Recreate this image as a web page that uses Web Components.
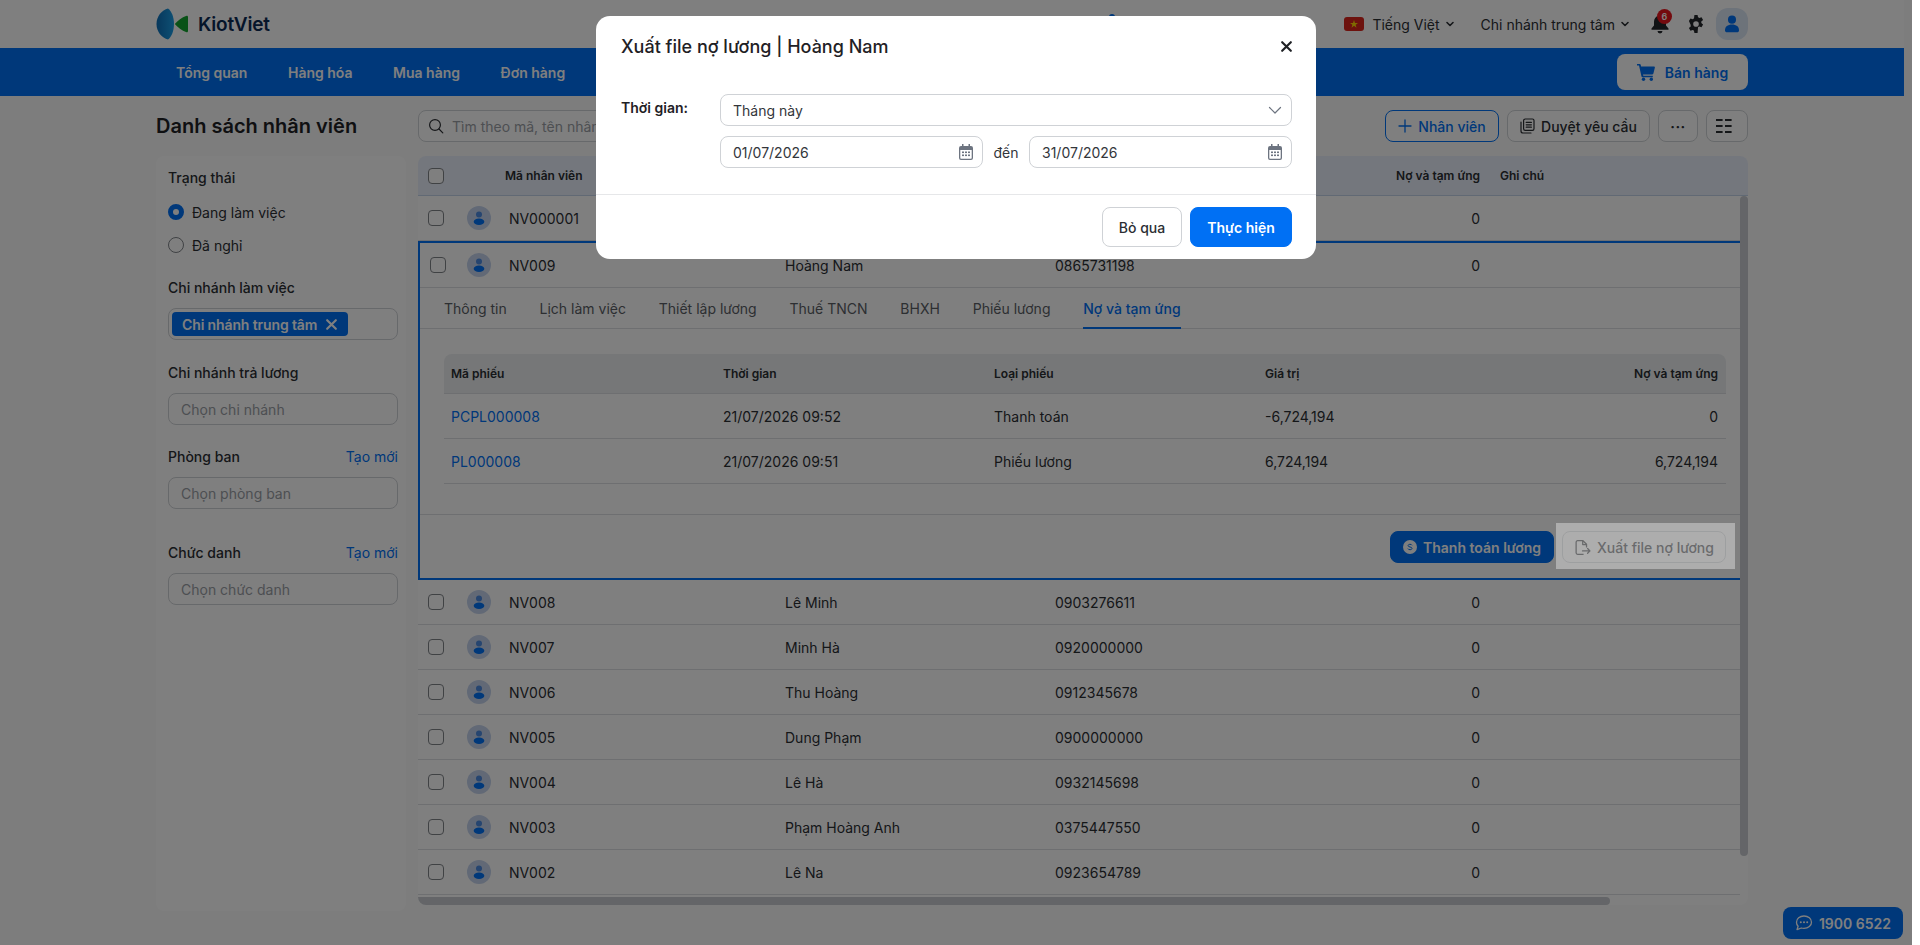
<!DOCTYPE html>
<html lang="vi">
<head>
<meta charset="utf-8">
<title>Danh sách nhân viên</title>
<style>
  html, body { margin: 0; height: 100%; overflow: hidden; background: #fff; }
  body { display: flex; font-family: Inter, "Noto Sans", sans-serif; }
</style>
</head>
<body>
<kv-app></kv-app>
<script>
// shared tiny helper so each element only declares css + html
class KvBase extends HTMLElement {
  constructor() {
    super();
    this.attachShadow({ mode: 'open' });
  }
  connectedCallback() {
    this.shadowRoot.innerHTML = `<style>*{box-sizing:border-box}${this.css()}</style>${this.html()}`;
  }
  a(name, fallback = '') {
    return this.getAttribute(name) ?? fallback;
  }
}

const ICONS = {
  search: '<svg width="16" height="16" viewBox="0 0 16 16" fill="none" stroke="currentColor" stroke-width="1.2"><circle cx="7" cy="7" r="5.4"/><path d="M11 11l3.8 3.8" stroke-linecap="round"/></svg>',
  chev: '<svg width="10" height="10" viewBox="0 0 10 10" fill="none" stroke="currentColor" stroke-width="1.6"><path d="M2 3.5L5 6.5L8 3.5" stroke-linecap="round" stroke-linejoin="round"/></svg>',
  chevLg: '<svg width="14" height="14" viewBox="0 0 14 14" fill="none" stroke="currentColor" stroke-width="1.2"><path d="M1.5 4.5L7 10L12.5 4.5" stroke-linecap="round" stroke-linejoin="round"/></svg>',
  plus: '<svg width="14" height="14" viewBox="0 0 14 14" fill="none" stroke="currentColor" stroke-width="1.3"><path d="M7 1v12M1 7h12" stroke-linecap="round"/></svg>',
  docs: '<svg width="15" height="16" viewBox="0 0 15 16" fill="none" stroke="currentColor" stroke-width="1.2"><rect x="3.6" y="1" width="10.4" height="11.4" rx="1.6"/><path d="M1 4v9a2 2 0 0 0 2 2h8M6.2 4.4h5.2M6.2 6.8h5.2M6.2 9.2h5.2" stroke-linecap="round"/></svg>',
  grid: '<svg width="16" height="14" viewBox="0 0 16 14" fill="currentColor"><rect y="0" width="6.6" height="2"/><rect x="9" y="0" width="6.6" height="2"/><rect y="6" width="6.6" height="2"/><rect x="9" y="6" width="6.6" height="2"/><rect y="12" width="6.6" height="2"/><rect x="9" y="12" width="6.6" height="2"/></svg>',
  cart: '<svg width="18" height="18" viewBox="0 0 18 18" fill="currentColor"><path d="M0 1h2.7c.5 0 .9.3 1 .8L4.1 3.4H17c.6 0 1 .6.9 1.2l-1.5 6c-.1.5-.5.8-1 .8H6l.3 1.4h9.5v1.5H5.5c-.5 0-.9-.3-1-.8L2 2.6H0z"/><circle cx="6.5" cy="16.2" r="1.7"/><circle cx="14.3" cy="16.2" r="1.7"/></svg>',
  gear: '<svg width="18" height="18" viewBox="1 0 14 16"><path fill="currentColor" fill-rule="evenodd" d="M6.6 0h2.8l.4 2.1c.4.2.8.3 1.1.6l2-.7 1.4 2.4-1.6 1.4a5 5 0 0 1 0 1.3l1.6 1.4-1.4 2.4-2-.7c-.3.2-.7.4-1.1.6L9.4 16H6.6l-.4-2.1c-.4-.2-.8-.4-1.1-.6l-2 .7-1.4-2.4 1.6-1.4a5 5 0 0 1 0-1.3L1.7 5.4 3.1 3l2 .7c.3-.3.7-.4 1.1-.6zM8 5.500a2.500 2.500 0 1 0 0 5 2.500 2.500 0 0 0 0-5z"/></svg>',
  bell: '<svg width="18" height="20" viewBox="0 0 18 20" fill="currentColor"><path d="M9 0c.8 0 1.4.6 1.4 1.4v.4C13.5 2.500 15 5 15 8v3.500l2.500 3v1.200H.5v-1.200l2.500-3V8c0-3 1.500-5.500 4.600-6.200v-.4C7.600.6 8.200 0 9 0z"/><path d="M6.500 17h5a2.500 2.500 0 0 1-5 0z"/></svg>',
  user: '<svg width="16" height="20" viewBox="0 0 16 20" fill="currentColor"><circle cx="8" cy="5" r="4.600"/><path d="M0 17c0-4 3-6.500 8-6.500s8 2.500 8 6.500c0 1.500-1 2.500-2.400 2.500H2.400C1 19.500 0 18.500 0 17z"/></svg>',
  cal: '<svg width="14" height="16" viewBox="0 0 14 16"><path fill="currentColor" fill-rule="evenodd" d="M3 0h1.500v2h5V0H11v2h1a2 2 0 0 1 2 2v10a2 2 0 0 1-2 2H2a2 2 0 0 1-2-2V4a2 2 0 0 1 2-2h1zM1.300 6v8c0 .4.300.7.700.7h10c.4 0 .7-.3.7-.7V6z"/><g fill="currentColor"><rect x="3" y="7.500" width="2" height="1.600"/><rect x="6" y="7.500" width="2" height="1.600"/><rect x="9" y="7.500" width="2" height="1.600"/><rect x="3" y="10.500" width="2" height="1.600"/><rect x="6" y="10.500" width="2" height="1.600"/><rect x="9" y="10.500" width="2" height="1.600"/></g></svg>',
  file: '<svg width="17" height="17" viewBox="0 0 16 16" fill="none" stroke="currentColor" stroke-width="1.2"><path d="M9 14.400H3.400a1.400 1.400 0 0 1-1.400-1.400V3a1.400 1.400 0 0 1 1.400-1.400h5L11.800 5v3" stroke-linejoin="round"/><path d="M8.200 1.800V5.200h3.400M8 11.200h7M12.800 9l2.200 2.200-2.200 2.200" stroke-linecap="round" stroke-linejoin="round"/></svg>',
  chat: '<svg width="18" height="16" viewBox="0 0 18 16" fill="none" stroke="currentColor" stroke-width="1.300"><path d="M9 1c4.300 0 7.500 2.700 7.500 6.200S13.300 13.400 9 13.400c-1 0-1.900-.1-2.700-.4L2 14.600l1.100-3.300C2 10.200 1.500 8.800 1.500 7.200 1.500 3.700 4.700 1 9 1z" stroke-linejoin="round"/><g fill="currentColor" stroke="none"><circle cx="5.800" cy="7.200" r="1"/><circle cx="9" cy="7.200" r="1"/><circle cx="12.200" cy="7.200" r="1"/></g></svg>',
  coin: '<svg width="14" height="14" viewBox="0 0 14 14"><circle cx="7" cy="7" r="7" fill="#fff"/><path d="M9 5.300C8.700 4.600 8 4.300 7 4.300c-1.100 0-1.900.5-1.900 1.300 0 1.900 3.900.9 3.900 2.800 0 .8-.8 1.300-2 1.300-1.100 0-1.800-.4-2.100-1.100" fill="none" stroke="#0070f4" stroke-width="1"/></svg>',
  x: '<svg width="12" height="12" viewBox="0 0 12 12" fill="none" stroke="currentColor" stroke-width="2"><path d="M2 2l8 8M10 2l-8 8" stroke-linecap="round"/></svg>'
};

class KvHeader extends KvBase {
  css() {
    return `
      :host { display: block; height: 48px; background: #fff; position: relative; }
      .inner { width: 1592px; height: 48px; margin: 0 auto; display: flex; align-items: center; color: #2b2e33; font-size: 14px; }
      .logo { display: flex; align-items: center; gap: 10px; }
      .word { font-size: 19px; font-weight: 600; color: #0b2a55; letter-spacing: -.2px; }
      .right { margin-left: auto; display: flex; align-items: center; }
      .lang, .branch { display: flex; align-items: center; gap: 5px; }
      .flag { width: 20px; height: 14px; border-radius: 3px; background: #da251d; display: flex; align-items: center; justify-content: center; margin-right: 3px; }
      .branch { margin-left: 26px; }
      .bell { margin-left: 21px; width: 18px; height: 20px; position: relative; color: #23262b; display: flex; }
      .badge { position: absolute; left: 6px; top: -5px; width: 15px; height: 15px; border-radius: 50%; background: #e8141c; color: #fff; font-size: 9px; font-weight: 600; display: flex; align-items: center; justify-content: center; }
      .gear { margin-left: 18px; color: #23262b; display: flex; }
      .me { margin-left: 11px; width: 32px; height: 32px; border-radius: 12px; background: #dbe6f5; color: #0070f4; display: flex; align-items: center; justify-content: center; }
      .me svg { width: 14px; height: 18px; }
      .dome { position: absolute; left: 1109px; top: 14px; width: 6px; height: 6px; border-radius: 50%; background: #0070f4; }
    `;
  }
  html() {
    return `
      <div class="dome"></div>
      <div class="inner">
        <div class="logo">
          <svg width="32" height="32" viewBox="0 0 32 32">
            <defs><linearGradient id="lg" x1="0" x2="1"><stop offset="0" stop-color="#0e6fb8"/><stop offset="1" stop-color="#1ca0e8"/></linearGradient></defs>
            <path d="M12 .5C15.500 3 18 9 18 16s-2.500 13-6 15.500C6 30 .5 24 .5 16S6 2 12 .5z" fill="url(#lg)"/>
            <path d="M32 9v14c0 .7-.5 1.500-1.400 1.200C25.500 22.500 22 19.500 18.800 16 22 12.500 25.500 9.500 30.600 7.800 31.500 7.500 32 8.300 32 9z" fill="#12a52e"/>
          </svg>
          <span class="word">KiotViet</span>
        </div>
        <div class="right">
          <div class="lang">
            <span class="flag"><svg width="8" height="8" viewBox="0 0 10 10"><path d="M5 0l1.200 3.600H10L7 5.900l1.100 3.700L5 7.300 1.900 9.600 3 5.900 0 3.600h3.800z" fill="#ffd900"/></svg></span>
            <span>Tiếng Việt</span>${ICONS.chev}
          </div>
          <div class="branch"><span>Chi nhánh trung tâm</span>${ICONS.chev}</div>
          <div class="bell">${ICONS.bell}<span class="badge">6</span></div>
          <div class="gear">${ICONS.gear}</div>
          <div class="me">${ICONS.user}</div>
        </div>
      </div>
    `;
  }
}

class KvNav extends KvBase {
  css() {
    return `
      :host { display: block; height: 48px; background: #0070f4; }
      .inner { width: 1592px; height: 48px; margin: 0 auto; display: flex; align-items: center; color: #fff; font-size: 14px; font-weight: 600; }
      .item { margin-left: 20px; margin-right: 20.5px; }
      .sell { margin-left: auto; width: 131px; height: 36px; border-radius: 8px; background: #fff; color: #0070f4; display: flex; align-items: center; justify-content: center; gap: 10px; }
    `;
  }
  html() {
    return `
      <div class="inner">
        <span class="item">Tổng quan</span>
        <span class="item">Hàng hóa</span>
        <span class="item">Mua hàng</span>
        <span class="item">Đơn hàng</span>
        <div class="sell">${ICONS.cart}<span>Bán hàng</span></div>
      </div>
    `;
  }
}

class KvButton extends KvBase {
  css() {
    const w = this.a('w');
    const h = this.a('h', '32');
    return `
      :host { display: inline-flex; }
      .b { height: ${h}px; ${w ? `width:${w}px;` : ''} border-radius: 8px; border: 1px solid #cfd2d6; background: #fff; color: #2b2e33; display: flex; align-items: center; justify-content: center; gap: 6px; font-size: 14px; font-weight: 500; white-space: nowrap; }
      .outline { border-color: #0070f4; color: #0070f4; }
      .primary { border-color: #0070f4; background: #0070f4; color: #fff; font-weight: 600; }
    `;
  }
  html() {
    return `<div class="b ${this.a('kind')}">${ICONS[this.a('icon')] || ''}<span><slot></slot></span></div>`;
  }
}

class KvCheckbox extends KvBase {
  css() {
    return `:host { display: block; width: 16px; height: 16px; border: 1.5px solid #808489; border-radius: 4px; background: #fff; }`;
  }
  html() { return ''; }
}

class KvAvatar extends KvBase {
  css() {
    return `:host { display: block; width: 24px; height: 24px; }`;
  }
  html() {
    return `<svg width="24" height="24" viewBox="0 0 24 24"><circle cx="12" cy="12" r="12" fill="#c4d3ec"/><circle cx="12" cy="8.600" r="3" fill="#4d8ae0"/><ellipse cx="12" cy="15.800" rx="5.300" ry="3.200" fill="#0070f4"/></svg>`;
  }
}

class KvField extends KvBase {
  css() {
    return `
      :host { display: block; }
      .head { display: flex; justify-content: space-between; height: 20px; line-height: 20px; font-size: 14px; font-weight: 500; color: #2b2e33; margin-bottom: 10px; }
      .new { color: #0070f4; font-weight: 400; }
      .box { height: 32px; border: 1px solid #cfd2d6; border-radius: 8px; background: #fff; display: flex; align-items: center; padding: 0 12px; font-size: 14px; color: #9a9ea5; }
      .box.tagged { padding: 0 3px; }
      .tag { height: 24px; width: 176px; border-radius: 4px; background: #0070f4; color: #fff; font-weight: 600; letter-spacing: -.12px; display: flex; align-items: center; justify-content: space-between; padding: 0 10px 0 10px; }
      .tag svg { width: 13px; height: 13px; }
    `;
  }
  html() {
    const tag = this.a('tag');
    return `
      <div class="head"><span>${this.a('label')}</span>${this.hasAttribute('create') ? '<span class="new">Tạo mới</span>' : ''}</div>
      ${tag
        ? `<div class="box tagged"><span class="tag"><span>${tag}</span>${ICONS.x}</span></div>`
        : `<div class="box">${this.a('placeholder')}</div>`}
    `;
  }
}

class KvSidebar extends KvBase {
  css() {
    return `
      :host { display: block; height: 755px; background: #fff; border-radius: 8px; padding: 12px 8px 0 12px; font-size: 14px; color: #2b2e33; }
      .t { height: 20px; line-height: 20px; font-weight: 500; }
      .radio { display: flex; align-items: center; gap: 8px; height: 20px; }
      .dot { width: 16px; height: 16px; border-radius: 50%; border: 1.5px solid #808489; flex: none; }
      .dot.on { border: 5px solid #0070f4; background: #fff; }
    `;
  }
  html() {
    return `
      <div class="t">Trạng thái</div>
      <div class="radio" style="margin-top:14px"><span class="dot on"></span>Đang làm việc</div>
      <div class="radio" style="margin-top:13px"><span class="dot"></span>Đã nghỉ</div>
      <kv-field style="margin-top:23px" label="Chi nhánh làm việc" tag="Chi nhánh trung tâm"></kv-field>
      <kv-field style="margin-top:23px" label="Chi nhánh trả lương" placeholder="Chọn chi nhánh"></kv-field>
      <kv-field style="margin-top:22px" label="Phòng ban" create placeholder="Chọn phòng ban"></kv-field>
      <kv-field style="margin-top:34px" label="Chức danh" create placeholder="Chọn chức danh"></kv-field>
    `;
  }
}

class KvToolbar extends KvBase {
  css() {
    return `
      :host { display: flex; gap: 8px; height: 32px; }
      .search { width: 600px; margin-right: auto; height: 32px; border: 1px solid #cfd2d6; border-radius: 8px; background: #fff; display: flex; align-items: center; gap: 8px; padding: 0 9px; font-size: 14px; color: #9a9ea5; }
      .search svg { color: #2b2e33; flex: none; }
      .more { font-weight: 700; letter-spacing: .5px; }
    `;
  }
  html() {
    return `
      <div class="search">${ICONS.search}<span>Tìm theo mã, tên nhân viên</span></div>
      <kv-button kind="outline" icon="plus" w="114">Nhân viên</kv-button>
      <kv-button icon="docs" w="143">Duyệt yêu cầu</kv-button>
      <kv-button w="40"><span class="more">···</span></kv-button>
      <kv-button icon="grid" w="42"></kv-button>
    `;
  }
}

const ROW_COLS = '49px 42px 276px 270px 225px 200px 1fr';

class KvRow extends KvBase {
  css() {
    return `
      :host { display: grid; grid-template-columns: ${ROW_COLS}; align-items: center; height: 45px; border-bottom: 1px solid #dcdfe3; font-size: 14px; color: #2b2e33; background: #fff; }
      kv-checkbox { margin-left: 10px; }
      .debt { text-align: right; }
    `;
  }
  html() {
    return `
      <kv-checkbox></kv-checkbox>
      <kv-avatar></kv-avatar>
      <span>${this.a('code')}</span>
      <span>${this.a('name')}</span>
      <span>${this.a('phone')}</span>
      <span class="debt">0</span>
      <span></span>
    `;
  }
}

class KvDebtTable extends KvBase {
  css() {
    return `
      :host { display: block; margin: 25px 14px 0 24px; font-size: 14px; color: #2b2e33; }
      .r { display: grid; grid-template-columns: 272px 271px 271px 1fr 160px; align-items: center; height: 45px; border-bottom: 1px solid #dcdfe3; padding: 0 8px 0 7px; }
      .h { height: 40px; background: #eceef1; font-size: 12px; font-weight: 600; border-radius: 8px 8px 0 0; }
      .end { text-align: right; }
      a { color: #0070f4; text-decoration: none; }
    `;
  }
  html() {
    return `
      <div class="r h"><span>Mã phiếu</span><span>Thời gian</span><span>Loại phiếu</span><span>Giá trị</span><span class="end">Nợ và tạm ứng</span></div>
      <div class="r"><a href="#">PCPL000008</a><span>21/07/2026 09:52</span><span>Thanh toán</span><span>-6,724,194</span><span class="end">0</span></div>
      <div class="r"><a href="#">PL000008</a><span>21/07/2026 09:51</span><span>Phiếu lương</span><span>6,724,194</span><span class="end">6,724,194</span></div>
    `;
  }
}

class KvDetail extends KvBase {
  css() {
    return `
      :host { display: block; height: 339px; border: 2px solid #0070f4; border-right: 0; background: #fff; }
      .top { display: grid; grid-template-columns: 47px 42px 276px 270px 225px 200px 1fr; align-items: center; height: 45px; border-bottom: 1px solid #dcdfe3; font-size: 14px; color: #2b2e33; }
      .top kv-checkbox { margin-left: 10px; }
      .debt { text-align: right; }
      .tabs { display: flex; height: 41px; border-bottom: 1px solid #dcdfe3; font-size: 14px; color: #5a5e65; padding-left: 24px; gap: 32.8px; }
      .tab { height: 41px; line-height: 41px; }
      .tab.on { color: #0070f4; font-weight: 500; border-bottom: 2px solid #0070f4; }
      .foot { margin-top: 30px; border-top: 1px solid #dcdfe3; display: flex; justify-content: flex-end; gap: 8px; padding: 16px 14px 0 0; }
    `;
  }
  html() {
    return `
      <div class="top">
        <kv-checkbox></kv-checkbox><kv-avatar></kv-avatar>
        <span>NV009</span><span>Hoàng Nam</span><span>0865731198</span><span class="debt">0</span><span></span>
      </div>
      <div class="tabs">
        <span class="tab">Thông tin</span>
        <span class="tab">Lịch làm việc</span>
        <span class="tab">Thiết lập lương</span>
        <span class="tab">Thuế TNCN</span>
        <span class="tab">BHXH</span>
        <span class="tab">Phiếu lương</span>
        <span class="tab on">Nợ và tạm ứng</span>
      </div>
      <kv-debt-table></kv-debt-table>
      <div class="foot">
        <kv-button kind="primary" icon="coin" w="164">Thanh toán lương</kv-button>
        <kv-button icon="file" w="164">Xuất file nợ lương</kv-button>
      </div>
    `;
  }
}

class KvEmployees extends KvBase {
  css() {
    return `
      :host { display: block; height: 749px; position: relative; background: #fff; border-radius: 8px; overflow: hidden; }
      .head { display: grid; grid-template-columns: ${ROW_COLS}; align-items: center; height: 40px; background: #e9eefa; border-bottom: 1px solid #c3d2e8; font-size: 12px; font-weight: 600; color: #2b2e33; }
      .head kv-checkbox { margin-left: 10px; }
      .code { margin-left: -4px; grid-column: 3; }
      .debt { grid-column: 6; text-align: right; }
      .note { margin-left: 20px; }
      .body { width: 1322px; }
      .vbar { position: absolute; right: 0; top: 40px; width: 8px; height: 660px; border-radius: 4px; background: #c8cbd1; }
      .hbar { position: absolute; left: 0; bottom: 0; height: 8px; width: 1192px; border-radius: 0 4px 4px 0; background: #c8cbd1; }
    `;
  }
  html() {
    return `
      <div class="head">
        <kv-checkbox></kv-checkbox>
        <span class="code">Mã nhân viên</span>
        <span class="debt">Nợ và tạm ứng</span>
        <span class="note">Ghi chú</span>
      </div>
      <div class="body"><slot></slot></div>
      <div class="vbar"></div>
      <div class="hbar"></div>
    `;
  }
}

class KvModal extends KvBase {
  css() {
    return `
      :host { display: block; width: 720px; height: 243px; background: #fff; border-radius: 14px; color: #1f2125; font-size: 14px; align-self: flex-start; }
      .title { display: flex; justify-content: space-between; align-items: center; height: 61px; padding: 0 23px 0 25px; font-size: 18px; font-weight: 500; }
      .title svg { width: 13px; height: 13px; color: #1f2125; }
      .body { display: grid; grid-template-columns: 99px 1fr; padding: 17px 24px 26px 25px; border-bottom: 1px solid #e6e7e9; }
      .lab { font-weight: 600; line-height: 28px; }
      .stack { display: flex; flex-direction: column; gap: 10px; }
      .input { height: 32px; border: 1px solid #cfd2d6; border-radius: 8px; display: flex; align-items: center; justify-content: space-between; padding: 0 9px 0 12px; color: #33363b; }
      .input svg { color: #6d7480; }
      .dates { display: flex; align-items: center; gap: 10.5px; color: #33363b; }
      .dates .input { flex: 1; }
      .foot { display: flex; justify-content: flex-end; gap: 8px; padding: 12px 24px 0; }
    `;
  }
  html() {
    return `
      <div class="title"><span>Xuất file nợ lương | Hoàng Nam</span>${ICONS.x}</div>
      <div class="body">
        <div class="lab">Thời gian:</div>
        <div class="stack">
          <div class="input"><span>Tháng này</span>${ICONS.chevLg}</div>
          <div class="dates">
            <div class="input"><span>01/07/2026</span>${ICONS.cal}</div>
            <span>đến</span>
            <div class="input"><span>31/07/2026</span>${ICONS.cal}</div>
          </div>
        </div>
      </div>
      <div class="foot">
        <kv-button w="80" h="40">Bỏ qua</kv-button>
        <kv-button kind="primary" w="102" h="40">Thực hiện</kv-button>
      </div>
    `;
  }
}

class KvApp extends KvBase {
  css() {
    return `
      :host { display: block; flex: none; width: 1912px; height: 945px; position: relative; overflow: hidden; background: #fafbfa; font-family: Inter, "Noto Sans", sans-serif; }
      .page { width: 1904px; }
      .grid { width: 1592px; margin: 14px auto 0; display: grid; grid-template-columns: 250px 1fr; gap: 14px 12px; }
      h1 { margin: 0; font-size: 20px; font-weight: 600; line-height: 32px; color: #1f2125; white-space: nowrap; }
      .overlay { position: absolute; inset: 0; background: rgba(0,0,0,.5); display: flex; justify-content: center; padding-top: 16px; }
      .spot { position: absolute; left: 1556px; top: 523px; width: 179px; height: 46px; background: rgba(255,255,255,.36); }
      .chat { position: absolute; left: 1783px; top: 907px; width: 120px; height: 32px; border-radius: 8px; background: #0070f4; color: #fff; font-size: 14px; font-weight: 600; display: flex; align-items: center; justify-content: center; gap: 6px; }
    `;
  }
  html() {
    return `
      <div class="page">
        <kv-header></kv-header>
        <kv-nav></kv-nav>
        <div class="grid">
          <h1>Danh sách nhân viên</h1>
          <kv-toolbar></kv-toolbar>
          <kv-sidebar></kv-sidebar>
          <kv-employees>
            <kv-row code="NV000001"></kv-row>
            <kv-detail></kv-detail>
            <kv-row code="NV008" name="Lê Minh" phone="0903276611"></kv-row>
            <kv-row code="NV007" name="Minh Hà" phone="0920000000"></kv-row>
            <kv-row code="NV006" name="Thu Hoàng" phone="0912345678"></kv-row>
            <kv-row code="NV005" name="Dung Phạm" phone="0900000000"></kv-row>
            <kv-row code="NV004" name="Lê Hà" phone="0932145698"></kv-row>
            <kv-row code="NV003" name="Phạm Hoàng Anh" phone="0375447550"></kv-row>
            <kv-row code="NV002" name="Lê Na" phone="0923654789"></kv-row>
          </kv-employees>
        </div>
      </div>
      <div class="chat">${ICONS.chat}<span>1900 6522</span></div>
      <div class="overlay">
        <div class="spot"></div>
        <kv-modal></kv-modal>
      </div>
    `;
  }
}

customElements.define('kv-header', KvHeader);
customElements.define('kv-nav', KvNav);
customElements.define('kv-button', KvButton);
customElements.define('kv-checkbox', KvCheckbox);
customElements.define('kv-avatar', KvAvatar);
customElements.define('kv-field', KvField);
customElements.define('kv-sidebar', KvSidebar);
customElements.define('kv-toolbar', KvToolbar);
customElements.define('kv-row', KvRow);
customElements.define('kv-debt-table', KvDebtTable);
customElements.define('kv-detail', KvDetail);
customElements.define('kv-employees', KvEmployees);
customElements.define('kv-modal', KvModal);
customElements.define('kv-app', KvApp);
</script>
</body>
</html>
